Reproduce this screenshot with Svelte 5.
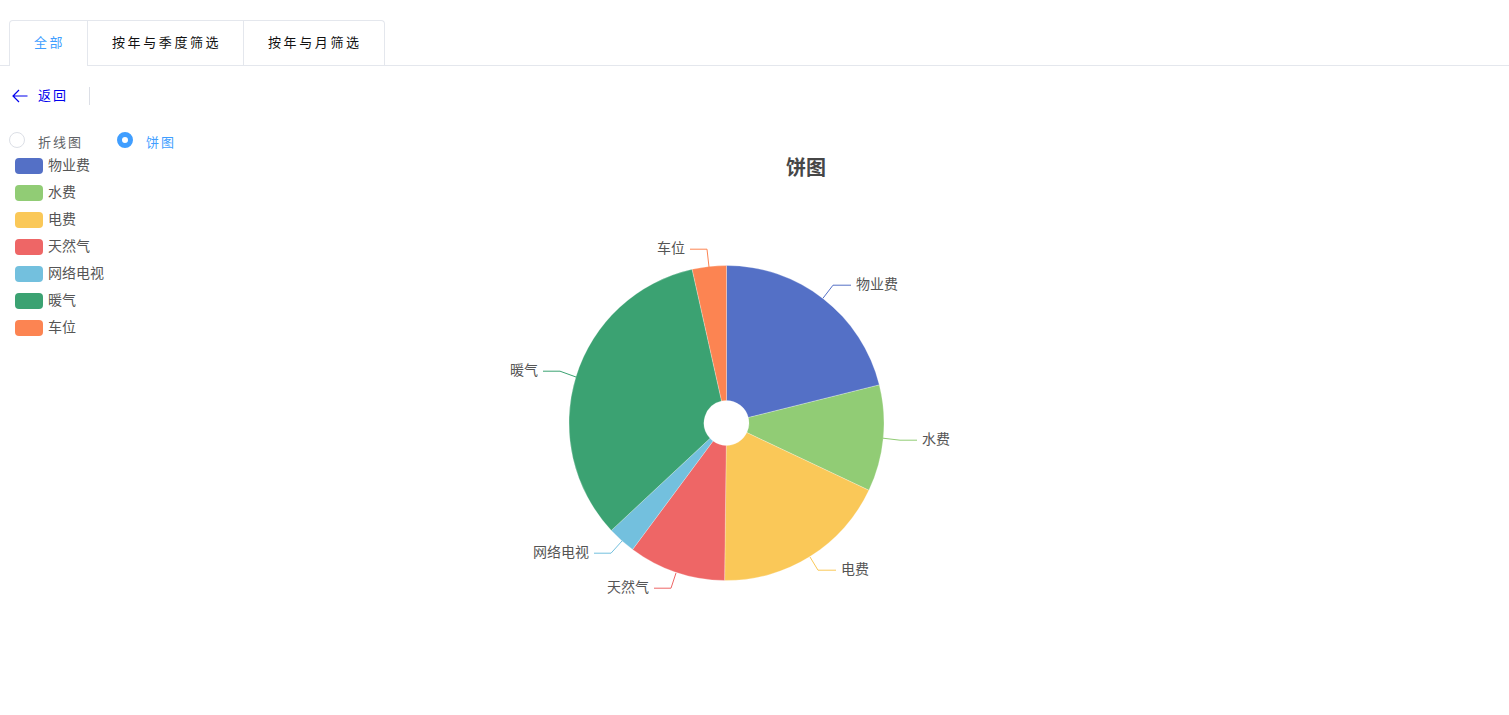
<script>
  const tabs = ['全部', '按年与季度筛选', '按年与月筛选'];
  let activeTab = $state(0);
  let chartType = $state('pie');

  const cx = 726.5;
  const cy = 273;
  const r0 = 22.5;
  const r1 = 157.5;

  // end angle clockwise from 12 o'clock, label line points and label anchor
  const series = [
    { name: '物业费', color: '#5470c6', end: 76, line: '823,148.2 833,135.2 851,135.2', x: 856, y: 133, anchor: 'start' },
    { name: '水费', color: '#91cc75', end: 115.3, line: '883,288.2 900,290.2 917,290.2', x: 922, y: 288, anchor: 'start' },
    { name: '电费', color: '#fac858', end: 180.7, line: '810,407 818,420.2 836,420.2', x: 841, y: 418, anchor: 'start' },
    { name: '天然气', color: '#ee6666', end: 216.6, line: '676,423 671,438.2 654,438.2', x: 649, y: 436, anchor: 'end' },
    { name: '网络电视', color: '#73c0de', end: 227, line: '622,391 611,403.2 594,403.2', x: 589, y: 401, anchor: 'end' },
    { name: '暖气', color: '#3ba272', end: 347.4, line: '576,227 560,221.2 543,221.2', x: 538, y: 219, anchor: 'end' },
    { name: '车位', color: '#fc8452', end: 360, line: '709,117 707,99.2 690,99.2', x: 685, y: 97, anchor: 'end' }
  ];

  function point(r, deg) {
    const a = (deg * Math.PI) / 180;
    return `${(cx + r * Math.sin(a)).toFixed(2)} ${(cy - r * Math.cos(a)).toFixed(2)}`;
  }

  function slice(start, end) {
    const large = end - start > 180 ? 1 : 0;
    return `M${point(r0, start)} L${point(r1, start)} A${r1} ${r1} 0 ${large} 1 ${point(r1, end)} L${point(r0, end)} A${r0} ${r0} 0 ${large} 0 ${point(r0, start)} Z`;
  }

  const slices = series.map((s, i) => ({
    ...s,
    d: slice(i === 0 ? 0 : series[i - 1].end, s.end)
  }));
</script>

<div class="page">
  <div class="tabs">
    <div class="tab-list">
      {#each tabs as tab, i}
        <button class="tab" class:active={activeTab === i} onclick={() => (activeTab = i)}>{tab}</button>
      {/each}
    </div>
  </div>

  <div class="back-row">
    <button class="back">
      <svg width="16" height="14" viewBox="0 0 16 14" fill="none" stroke="#0000ee" stroke-width="1.2">
        <path d="M15.5 7H1M7 1L1 7l6 6" />
      </svg>
      <span class="back-text">返回</span>
    </button>
    <span class="divider"></span>
  </div>

  <div class="radios">
    <label class="radio" class:checked={chartType === 'line'}>
      <input type="radio" name="chart" value="line" bind:group={chartType} />
      <span class="dot"></span>
      <span class="radio-text">折线图</span>
    </label>
    <label class="radio" class:checked={chartType === 'pie'}>
      <input type="radio" name="chart" value="pie" bind:group={chartType} />
      <span class="dot"></span>
      <span class="radio-text">饼图</span>
    </label>
  </div>

  <svg class="chart" width="1509" height="565" viewBox="0 0 1509 565">
    <text class="title" x="806" y="16" text-anchor="middle" dominant-baseline="central">饼图</text>

    {#each slices as s, i}
      <rect x="15" y={8 + i * 27} width="28" height="16" rx="4" fill={s.color} />
      <text class="label" x="48" y={13.5 + i * 27} dominant-baseline="central">{s.name}</text>
    {/each}

    {#each slices as s}
      <path d={s.d} fill={s.color} stroke="#fff" stroke-width="0.25" />
      <polyline points={s.line} fill="none" stroke={s.color} stroke-width="1" />
      <text class="label" x={s.x} y={s.y} text-anchor={s.anchor} dominant-baseline="central">{s.name}</text>
    {/each}
  </svg>
</div>

<style>
  :global(body) {
    margin: 0;
    background: #fff;
  }
  .page {
    font-family: "Noto Sans CJK SC", "Liberation Sans", sans-serif;
    height: 715px;
    overflow: hidden;
  }
  .tabs {
    padding: 20px 9px 0;
    border-bottom: 1px solid #e4e7ed;
    height: 45px;
  }
  .tab-list {
    display: inline-flex;
    border: 1px solid #e4e7ed;
    border-bottom: none;
    border-radius: 4px 4px 0 0;
    height: 45px;
  }
  .tab {
    background: none;
    border: none;
    border-left: 1px solid #e4e7ed;
    border-bottom: 1px solid #e4e7ed;
    height: 45px;
    padding: 0 21.8px 4px 24px;
    font-family: inherit;
    font-size: 13px;
    letter-spacing: 2.6px;
    color: #111;
    cursor: pointer;
  }
  .tab:first-child {
    border-left: none;
  }
  .tab:last-child {
    padding-right: 22.4px;
  }
  .tab.active {
    color: #409eff;
    border-bottom-color: #fff;
  }
  .back-row {
    display: flex;
    align-items: center;
    padding: 21px 0 0 12px;
    height: 18px;
  }
  .back {
    display: flex;
    align-items: center;
    gap: 10px;
    background: none;
    border: none;
    padding: 0;
    font-family: inherit;
    font-size: 13px;
    letter-spacing: 2px;
    color: #0000ee;
    cursor: pointer;
  }
  .back-text {
    margin-bottom: 3px;
  }
  .divider {
    width: 1px;
    height: 18px;
    background: #dcdfe6;
    margin-left: 21px;
  }
  .radios {
    display: flex;
    gap: 34px;
    padding: 27px 0 0 9px;
    height: 18px;
  }
  .radio {
    display: flex;
    align-items: flex-start;
    cursor: pointer;
  }
  .radio input {
    display: none;
  }
  .dot {
    box-sizing: border-box;
    width: 16px;
    height: 16px;
    border: 1px solid #dcdfe6;
    border-radius: 50%;
    background: #fff;
  }
  .checked .dot {
    border: 5px solid #409eff;
  }
  .radio-text {
    margin-left: 13px;
    font-size: 13px;
    line-height: 20px;
    letter-spacing: 2px;
    color: #606266;
  }
  .checked .radio-text {
    color: #409eff;
  }
  .chart {
    display: block;
  }
  .title {
    font-size: 20px;
    font-weight: 700;
    fill: #464646;
  }
  .label {
    font-size: 14px;
    fill: #555;
  }
</style>
